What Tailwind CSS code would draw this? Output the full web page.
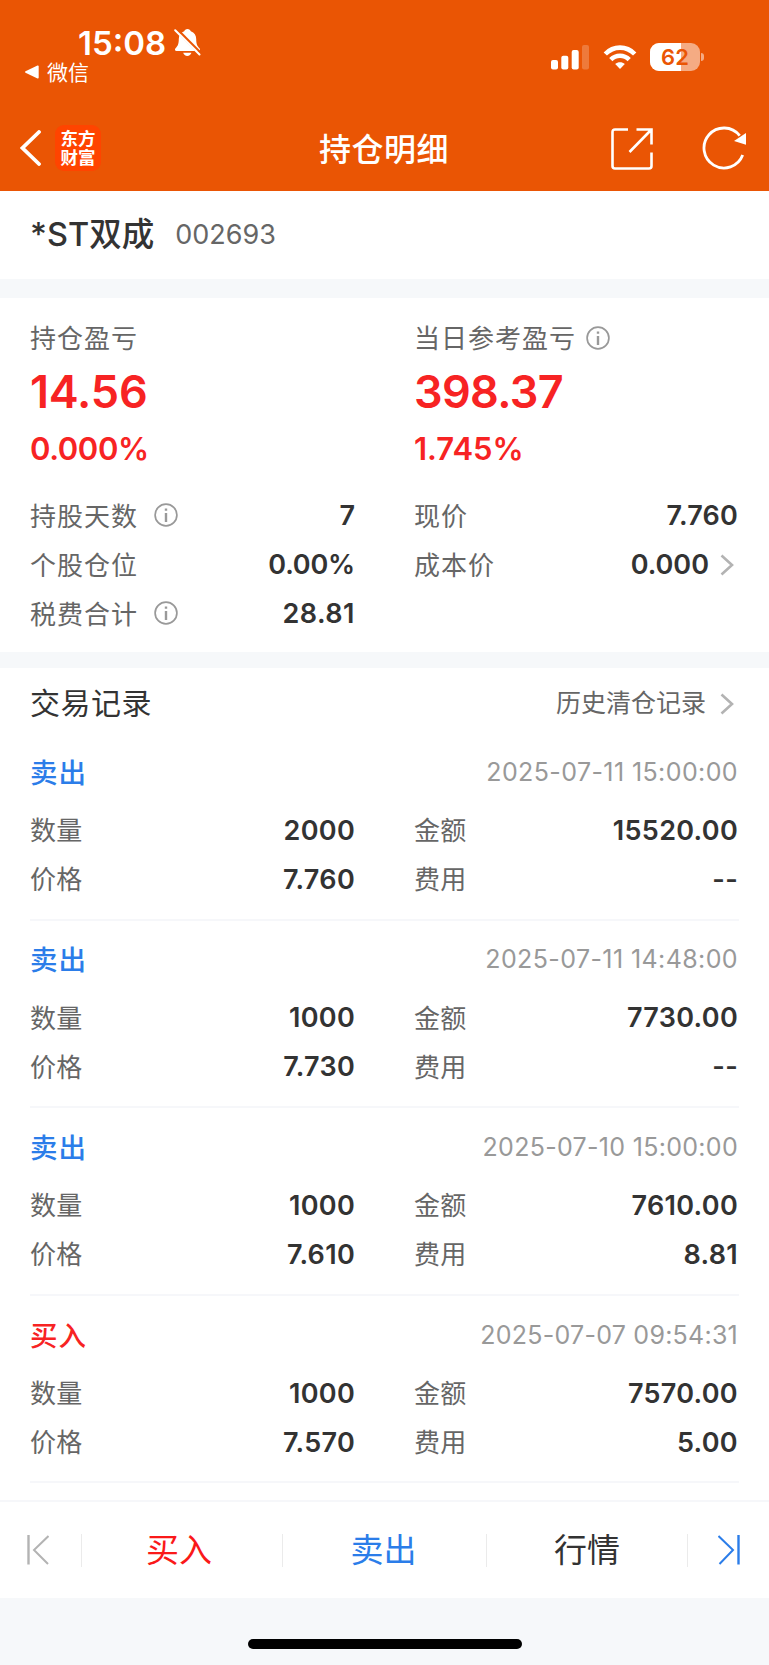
<!DOCTYPE html>
<html lang="zh-CN">
<head>
  <meta charset="UTF-8" />
  <meta name="viewport" content="width=device-width, initial-scale=1.0" />
  <title>持仓明细</title>
  <script src="https://cdn.jsdelivr.net/npm/@tailwindcss/browser@4"></script>
  <style>
    body {
      font-family: Inter, 'Noto Sans CJK SC', sans-serif;
    }
  </style>
</head>
<body class="w-[769px] h-[1665px] overflow-hidden bg-white text-[#333] flex flex-col whitespace-nowrap">

  <!-- Status bar + nav -->
  <header class="h-[191px] shrink-0 bg-[#ea5504] text-white">
    <div class="h-[105px] flex justify-between">
      <div class="pt-[24px] pl-[24px]">
        <div class="h-[37px] pl-[54px] flex items-center">
          <span class="w-[88px] pt-px text-[33px] font-semibold leading-none">15:08</span>
          <svg class="w-[27px] h-[29px] ml-[8px]" viewBox="0 0 27 29" fill="none">
            <path d="M13.500 1c-1.700 0-3 1-3.300 2.300C6.600 4.600 4.800 7.500 4.800 11c0 5-1 7-3.300 9.300-1 1.100-.6 2.700 1 2.700h22c1.600 0 2-1.600 1-2.700C23.200 18 22.200 16 22.200 11c0-3.500-1.800-6.400-5.400-7.700C16.500 2 15.200 1 13.500 1z" fill="white"/>
            <path d="M9.200 24.700h8.200c-.5 1.900-2.100 3.200-4.100 3.200s-3.600-1.300-4.100-3.200z" fill="white"/>
            <path d="M2.500 0.500L27.500 25.500" stroke="#ea5504" stroke-width="2.200"/>
            <path d="M-1 0L26 27" stroke="#ea5504" stroke-width="1.500"/>
            <path d="M1.200 2.200L25.500 26.500" stroke="white" stroke-width="2" stroke-linecap="round"/>
          </svg>
        </div>
        <div class="h-[22px] flex items-center gap-[8px]">
          <svg class="w-[15px] h-[14px]" viewBox="0 0 15 14"><path d="M13.500.5L1.500 6.200q-1.200.8 0 1.600l12 5.700q1.200.3 1.200-1v-11q0-1.300-1.200-1z" fill="white"/></svg>
          <span class="text-[21px] leading-none">微信</span>
        </div>
      </div>
      <div class="pt-[43px] pr-[65px] flex items-start">
        <svg class="w-[38px] h-[28px]" viewBox="0 0 38 28" fill="white">
          <rect x="0" y="17" width="7" height="9.500" rx="2"/>
          <rect x="10.300" y="12.700" width="7" height="13.800" rx="2"/>
          <rect x="20.700" y="7" width="7" height="19.500" rx="2"/>
          <rect x="31" y="2" width="7" height="24.500" rx="2" fill-opacity=".22"/>
        </svg>
        <svg class="w-[34px] h-[28px] ml-[14px]" viewBox="0 0 34 28" fill="none" stroke="white" stroke-width="4.600">
          <path d="M2.300 11C10.500 2.500 23.500 2.500 31.700 11"/>
          <path d="M7.800 16.600C13 11.400 21 11.400 26.200 16.600"/>
          <path d="M17 26l-4.800-5c2.700-2.400 6.900-2.400 9.600 0z" fill="white" stroke="none"/>
        </svg>
        <div class="relative ml-[13px] w-[50px] h-[28px] rounded-[9px] bg-[#f5ab83] overflow-hidden">
          <div class="w-[31px] h-full bg-white"></div>
          <span class="absolute inset-0 text-center text-[22px] leading-[29px] font-semibold text-[#ea5504]">62</span>
        </div>
        <div class="w-[3px] h-[8px] mt-[10px] ml-px rounded-r-full bg-[#f5ab83]"></div>
      </div>
    </div>
    <nav class="h-[86px] flex items-center">
      <div class="w-[319px] h-full pl-[20px] flex items-center">
        <svg class="w-[21px] h-[36px]" viewBox="0 0 21 36" fill="none" stroke="white" stroke-width="3.800"><path d="M19 2L2.500 18l16.500 16" stroke-linecap="round"/></svg>
        <div class="w-[46px] h-[46px] ml-[14px] rounded-[9px] bg-[#ff4400] flex flex-col items-center justify-center text-[17.500px] font-bold leading-[19px]">
          <span>东方</span>
          <span>财富</span>
        </div>
      </div>
      <h1 class="w-[132px] pt-[3px] text-[32px] tracking-[.5px] font-medium leading-none">持仓明细</h1>
      <svg class="w-[42px] h-[42px] mt-[2px] ml-[160px]" viewBox="0 0 42 42" fill="none" stroke="white" stroke-width="2.600">
        <path d="M17 1.500H4Q1.500 1.500 1.500 4v34Q1.500 40.500 4 40.500h34q2.500 0 2.500-2.500V24.500"/>
        <path d="M25.500 1.500h15V16.500M40 2L18.500 24"/>
      </svg>
      <svg class="w-[46px] h-[44px] ml-[49px]" viewBox="0 0 46 44" fill="none">
        <path d="M37.700 9.600A20 20 0 1 0 40.700 29.100" stroke="white" stroke-width="2.800"/>
        <path d="M44 7V18.700L32 15z" fill="white"/>
      </svg>
    </nav>
  </header>

  <!-- Stock name -->
  <section class="h-[88px] shrink-0 pl-[30px] flex items-center">
    <span class="text-[32.500px] font-medium">*ST双成</span>
    <span class="ml-[21px] text-[27px] text-[#666]">002693</span>
  </section>

  <div class="h-[19px] shrink-0 bg-[#f6f8fa]"></div>

  <!-- Position summary -->
  <section class="h-[354px] shrink-0 pt-[15px] px-[30px] grid grid-cols-[325px_324px] gap-x-[59px] content-start text-[26px] text-[#666]">
    <div>
      <div class="h-[50px] flex items-center tracking-[1px]">持仓盈亏</div>
      <div class="h-[58px] flex items-center text-[45px] tracking-[-.2px] font-semibold text-[#f72323]">14.56</div>
      <div class="h-[56px] pt-px flex items-center text-[31px] tracking-[-.4px] font-semibold text-[#f72323]">0.000%</div>
    </div>
    <div>
      <div class="h-[50px] flex items-center tracking-[1px]">当日参考盈亏
        <svg class="w-[24px] h-[24px] ml-[10px] mb-px" viewBox="0 0 24 24" fill="none" stroke="#999" stroke-width="1.700"><circle cx="12" cy="12" r="10.900"/><path d="M12 10v9M12 5.500v2.300" stroke-width="2.400"/></svg>
      </div>
      <div class="h-[58px] flex items-center text-[45px] tracking-[-.7px] font-semibold text-[#f72323]">398.37</div>
      <div class="h-[56px] pt-px flex items-center text-[31px] font-semibold text-[#f72323]">1.745%</div>
    </div>
    <div class="pt-[15px]">
      <div class="h-[49px] flex items-center">
        <span class="tracking-[1px]">持股天数</span>
        <svg class="w-[24px] h-[24px] ml-[16px] mb-[3px]" viewBox="0 0 24 24" fill="none" stroke="#999" stroke-width="1.700"><circle cx="12" cy="12" r="10.900"/><path d="M12 10v9M12 5.500v2.300" stroke-width="2.400"/></svg>
        <span class="ml-auto text-[27px] font-semibold text-[#333]">7</span>
      </div>
      <div class="h-[49px] flex items-center justify-between">
        <span class="tracking-[1px]">个股仓位</span>
        <span class="text-[27px] tracking-[-.2px] font-semibold text-[#333]">0.00%</span>
      </div>
      <div class="h-[49px] flex items-center">
        <span class="tracking-[1px]">税费合计</span>
        <svg class="w-[24px] h-[24px] ml-[16px] mb-[3px]" viewBox="0 0 24 24" fill="none" stroke="#999" stroke-width="1.700"><circle cx="12" cy="12" r="10.900"/><path d="M12 10v9M12 5.500v2.300" stroke-width="2.400"/></svg>
        <span class="ml-auto text-[27px] tracking-[.5px] font-semibold text-[#333]">28.81</span>
      </div>
    </div>
    <div class="pt-[15px]">
      <div class="h-[49px] flex items-center justify-between">
        <span class="tracking-[1px]">现价</span>
        <span class="text-[27px] tracking-[.2px] font-semibold text-[#333]">7.760</span>
      </div>
      <div class="h-[49px] flex items-center">
        <span class="tracking-[1px]">成本价</span>
        <span class="ml-auto text-[27px] font-semibold text-[#333]">0.000</span>
        <svg class="w-[14px] h-[22px] ml-[11px] mr-[4px] mb-[2px]" viewBox="0 0 14 22" fill="none" stroke="#b3b3b3" stroke-width="2.600"><path d="M1.500 1.500L12 11 1.500 20.500"/></svg>
      </div>
    </div>
  </section>

  <div class="h-[16px] shrink-0 bg-[#f6f8fa]"></div>

  <!-- Trade records -->
  <section class="h-[832px] shrink-0 px-[30px] text-[26px] text-[#666]">
    <div class="h-[65px] pt-[6px] flex items-center">
      <h2 class="text-[30px] tracking-[.5px] text-[#333]">交易记录</h2>
      <span class="ml-auto pt-px text-[25px]">历史清仓记录</span>
      <svg class="w-[14px] h-[22px] ml-[14px] mr-[5px]" viewBox="0 0 14 22" fill="none" stroke="#b3b3b3" stroke-width="2.600"><path d="M1.500 1.500L12 11 1.500 20.500"/></svg>
    </div>

    <div class="h-[187.600px] pt-[16px] border-b-2 border-[#f6f7fa]">
      <div class="h-[49px] mb-[8px] flex items-center justify-between">
        <span class="text-[27.500px] tracking-[1px] font-medium text-[#2b7de9]">卖出</span>
        <span class="pb-[2px] mr-px text-[25px] tracking-[.4px] text-[#999]">2025-07-11 15:00:00</span>
      </div>
      <div class="grid grid-cols-[325px_324px] gap-x-[59px] tracking-[.3px]">
        <div class="h-[49px] flex items-center justify-between"><span>数量</span><span class="pt-px text-[27px] font-semibold text-[#333]">2000</span></div>
        <div class="h-[49px] flex items-center justify-between"><span>金额</span><span class="pt-px text-[27px] font-semibold text-[#333]">15520.00</span></div>
        <div class="h-[49px] flex items-center justify-between"><span>价格</span><span class="pt-px text-[27px] font-semibold text-[#333]">7.760</span></div>
        <div class="h-[49px] flex items-center justify-between"><span>费用</span><span class="pt-px text-[27px] font-semibold text-[#333]">--</span></div>
      </div>
    </div>

    <div class="h-[187.600px] pt-[16px] border-b-2 border-[#f6f7fa]">
      <div class="h-[49px] mb-[8px] flex items-center justify-between">
        <span class="text-[27.500px] tracking-[1px] font-medium text-[#2b7de9]">卖出</span>
        <span class="pb-[2px] mr-px text-[25px] tracking-[.4px] text-[#999]">2025-07-11 14:48:00</span>
      </div>
      <div class="grid grid-cols-[325px_324px] gap-x-[59px] tracking-[.3px]">
        <div class="h-[49px] flex items-center justify-between"><span>数量</span><span class="pt-px text-[27px] font-semibold text-[#333]">1000</span></div>
        <div class="h-[49px] flex items-center justify-between"><span>金额</span><span class="pt-px text-[27px] font-semibold text-[#333]">7730.00</span></div>
        <div class="h-[49px] flex items-center justify-between"><span>价格</span><span class="pt-px text-[27px] font-semibold text-[#333]">7.730</span></div>
        <div class="h-[49px] flex items-center justify-between"><span>费用</span><span class="pt-px text-[27px] font-semibold text-[#333]">--</span></div>
      </div>
    </div>

    <div class="h-[187.600px] pt-[16px] border-b-2 border-[#f6f7fa]">
      <div class="h-[49px] mb-[8px] flex items-center justify-between">
        <span class="text-[27.500px] tracking-[1px] font-medium text-[#2b7de9]">卖出</span>
        <span class="pb-[2px] mr-px text-[25px] tracking-[.3px] text-[#999]">2025-07-10 15:00:00</span>
      </div>
      <div class="grid grid-cols-[325px_324px] gap-x-[59px] tracking-[.3px]">
        <div class="h-[49px] flex items-center justify-between"><span>数量</span><span class="pt-px text-[27px] font-semibold text-[#333]">1000</span></div>
        <div class="h-[49px] flex items-center justify-between"><span>金额</span><span class="pt-px text-[27px] font-semibold text-[#333]">7610.00</span></div>
        <div class="h-[49px] flex items-center justify-between"><span>价格</span><span class="pt-px text-[27px] font-semibold text-[#333]">7.610</span></div>
        <div class="h-[49px] flex items-center justify-between"><span>费用</span><span class="pt-px text-[27px] font-semibold text-[#333]">8.81</span></div>
      </div>
    </div>

    <div class="h-[187.600px] pt-[16px] border-b-2 border-[#f6f7fa]">
      <div class="h-[49px] mb-[8px] flex items-center justify-between">
        <span class="text-[27.500px] tracking-[1px] font-medium text-[#f72323]">买入</span>
        <span class="pb-[2px] mr-px text-[25px] tracking-[.25px] text-[#999]">2025-07-07 09:54:31</span>
      </div>
      <div class="grid grid-cols-[325px_324px] gap-x-[59px] tracking-[.3px]">
        <div class="h-[49px] flex items-center justify-between"><span>数量</span><span class="pt-px text-[27px] font-semibold text-[#333]">1000</span></div>
        <div class="h-[49px] flex items-center justify-between"><span>金额</span><span class="pt-px text-[27px] font-semibold text-[#333]">7570.00</span></div>
        <div class="h-[49px] flex items-center justify-between"><span>价格</span><span class="pt-px text-[27px] font-semibold text-[#333]">7.570</span></div>
        <div class="h-[49px] flex items-center justify-between"><span>费用</span><span class="pt-px text-[27px] font-semibold text-[#333]">5.00</span></div>
      </div>
    </div>
  </section>

  <!-- Bottom actions -->
  <footer class="h-[98px] shrink-0 border-t-2 border-[#f6f7fa] flex items-center text-[33px]">
    <div class="w-[81px] pl-[27px]">
      <svg class="w-[22px] h-[30px]" viewBox="0 0 22 30" fill="none" stroke="#b3b3b3" stroke-width="2"><path d="M1.500 0v29.500" stroke-width="2.400"/><path d="M21.500 1L7 15l14 14"/></svg>
    </div>
    <div class="w-px h-[33px] bg-[#ebebeb]"></div>
    <div class="w-[200px] pt-[2px] pr-[6px] text-center text-[#fa1919]">买入</div>
    <div class="w-px h-[33px] bg-[#ebebeb]"></div>
    <div class="w-[203px] pt-[2px] pr-[2px] text-center text-[#2b7de9]">卖出</div>
    <div class="w-px h-[33px] bg-[#ebebeb]"></div>
    <div class="w-[200px] pt-[2px] text-center">行情</div>
    <div class="w-px h-[33px] bg-[#ebebeb]"></div>
    <div class="w-[81px] pl-[30px]">
      <svg class="w-[22px] h-[30px]" viewBox="0 0 22 30" fill="none" stroke="#2b7de9" stroke-width="2"><path d="M20.500 0v29.500" stroke-width="2.400"/><path d="M.5 1L15 15 1.500 29"/></svg>
    </div>
  </footer>

  <!-- Home indicator -->
  <div class="grow bg-[#f6f8fa] flex justify-center items-end pb-[16px]">
    <div class="w-[274px] h-[10px] rounded-full bg-black"></div>
  </div>
</body>
</html>
